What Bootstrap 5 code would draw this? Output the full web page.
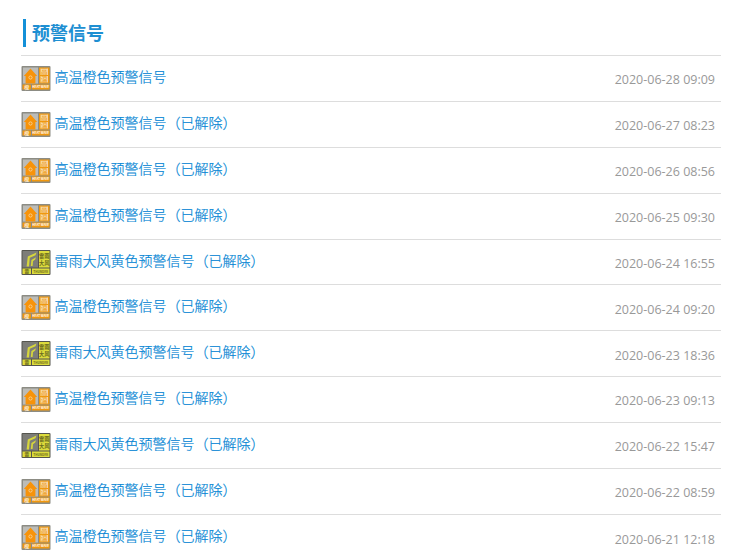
<!DOCTYPE html>
<html lang="zh-CN">
<head>
<meta charset="utf-8">
<title>预警信号</title>
<link rel="stylesheet" href="https://cdn.jsdelivr.net/npm/bootstrap@5.3.0/dist/css/bootstrap.min.css">
<style>
body { background: #fff; font-family: "Open Sans", "Noto Sans CJK SC", sans-serif; overflow: hidden; height: 557px; }
.alert-page { padding: 0 26px 0 21px; }
.alert-head { height: 56px; padding: 19px 0 0 2px; border-bottom: 1px solid #ddd; }
.alert-title { border-left: 3px solid #1490d8; height: 28px; padding-left: 6px; margin: 0; font-size: 18px; line-height: 28px; font-weight: 700; color: #1e8fd2; }
.alert-row { height: 45.9px; border-bottom: 1px solid #ddd; }
.alert-row:last-child { border-bottom: 0; }
.alert-link { color: #0586d4; font-family: "Noto Sans CJK SC", sans-serif; font-weight: 300; -webkit-text-stroke: .2px #0586d4; font-size: 14px; line-height: 20px; text-decoration: none; margin-top: -5px; margin-left: -.5px; }
.alert-time { color: #999; font-size: 12.5px; line-height: 18px; margin-top: 3.6px; margin-right: 6px; }
.alert-ico { width: 30px; height: 25px; margin-right: 4px; flex: none; }
.ico-txt { font-family: "Noto Sans CJK SC", sans-serif; font-weight: 700; text-anchor: middle; }
</style>
</head>
<body>
<svg width="0" height="0" class="d-block" aria-hidden="true">
  <defs>
    <symbol id="ico-heat" viewBox="0 0 30 25">
      <rect x=".5" width="29" height="25" rx="1" fill="#8c8c84"/>
      <rect x="2" y="1.5" width="15" height="16" fill="#bcbcb8"/>
      <rect x="18" y="1.5" width="10.5" height="16" fill="#f0980f"/>
      <rect x="1.5" y="18.5" width="8.5" height="5" fill="#f0980f"/>
      <rect x="11" y="18.5" width="17.5" height="5" fill="#f0980f"/>
      <path d="M9.5 2.5 L16.2 10 H14.4 V17.5 H4.6 V10 H2.8 Z" fill="#f7930a"/>
      <circle cx="9.5" cy="11.5" r="1.6" fill="none" stroke="#f8dfb6" stroke-width=".7"/>
      <rect x="19.5" y="2.5" width="7.5" height="6.5" fill="#f6d9a8"/>
      <rect x="19.5" y="10" width="7.5" height="6.5" fill="#f6d9a8"/>
      <text class="ico-txt" x="23.2" y="8.4" font-size="6.5" fill="#f0a83a">高</text>
      <text class="ico-txt" x="23.2" y="15.9" font-size="6.5" fill="#f0a83a">温</text>
      <text class="ico-txt" x="5.8" y="22.8" font-size="5" fill="#f9e8d0">橙</text>
      <text class="ico-txt" x="19.7" y="22.4" font-size="3" fill="#fff">HEAT WAVE</text>
    </symbol>
    <symbol id="ico-storm" viewBox="0 0 30 25">
      <rect x=".5" width="29" height="25" rx="1" fill="#55554e"/>
      <rect x="1.5" y="1" width="15.5" height="16.5" fill="#7d7d78"/>
      <rect x="18" y="1" width="10.5" height="16.5" fill="#dcdc3c"/>
      <rect x="1.5" y="18.5" width="8.5" height="5.5" fill="#dcdc3c"/>
      <rect x="11" y="18.5" width="17.5" height="5.5" fill="#dcdc3c"/>
      <path d="M5.6 16.5 L6.8 6.5 L15.5 2.5 L14.5 5.2 L8.8 7.8 L8 16.5 Z" fill="#d6d63c"/>
      <path d="M9.8 16 L10.4 10 L15 7.2 L14.2 9.6 L12 11.2 L11.6 16 Z" fill="#d6d63c"/>
      <text class="ico-txt" x="23.2" y="8" font-size="5.2" fill="#6b6b20">雷雨</text>
      <text class="ico-txt" x="23.2" y="15" font-size="5.2" fill="#6b6b20">大风</text>
      <text class="ico-txt" x="5.8" y="23.2" font-size="5" fill="#6b6b20">黄</text>
      <text class="ico-txt" x="19.7" y="22.8" font-size="3" fill="#6b6b20">THUNDER</text>
    </symbol>
  </defs>
</svg>
<main class="alert-page">
  <header class="alert-head"><h1 class="alert-title">预警信号</h1></header>
  <div>
    <div class="alert-row d-flex align-items-center"><svg class="alert-ico"><use href="#ico-heat"/></svg><a class="alert-link" href="#">高温橙色预警信号</a><span class="alert-time ms-auto">2020-06-28 09:09</span></div>
    <div class="alert-row d-flex align-items-center"><svg class="alert-ico"><use href="#ico-heat"/></svg><a class="alert-link" href="#">高温橙色预警信号（已解除）</a><span class="alert-time ms-auto">2020-06-27 08:23</span></div>
    <div class="alert-row d-flex align-items-center"><svg class="alert-ico"><use href="#ico-heat"/></svg><a class="alert-link" href="#">高温橙色预警信号（已解除）</a><span class="alert-time ms-auto">2020-06-26 08:56</span></div>
    <div class="alert-row d-flex align-items-center"><svg class="alert-ico"><use href="#ico-heat"/></svg><a class="alert-link" href="#">高温橙色预警信号（已解除）</a><span class="alert-time ms-auto">2020-06-25 09:30</span></div>
    <div class="alert-row d-flex align-items-center"><svg class="alert-ico"><use href="#ico-storm"/></svg><a class="alert-link" href="#">雷雨大风黄色预警信号（已解除）</a><span class="alert-time ms-auto">2020-06-24 16:55</span></div>
    <div class="alert-row d-flex align-items-center"><svg class="alert-ico"><use href="#ico-heat"/></svg><a class="alert-link" href="#">高温橙色预警信号（已解除）</a><span class="alert-time ms-auto">2020-06-24 09:20</span></div>
    <div class="alert-row d-flex align-items-center"><svg class="alert-ico"><use href="#ico-storm"/></svg><a class="alert-link" href="#">雷雨大风黄色预警信号（已解除）</a><span class="alert-time ms-auto">2020-06-23 18:36</span></div>
    <div class="alert-row d-flex align-items-center"><svg class="alert-ico"><use href="#ico-heat"/></svg><a class="alert-link" href="#">高温橙色预警信号（已解除）</a><span class="alert-time ms-auto">2020-06-23 09:13</span></div>
    <div class="alert-row d-flex align-items-center"><svg class="alert-ico"><use href="#ico-storm"/></svg><a class="alert-link" href="#">雷雨大风黄色预警信号（已解除）</a><span class="alert-time ms-auto">2020-06-22 15:47</span></div>
    <div class="alert-row d-flex align-items-center"><svg class="alert-ico"><use href="#ico-heat"/></svg><a class="alert-link" href="#">高温橙色预警信号（已解除）</a><span class="alert-time ms-auto">2020-06-22 08:59</span></div>
    <div class="alert-row d-flex align-items-center"><svg class="alert-ico"><use href="#ico-heat"/></svg><a class="alert-link" href="#">高温橙色预警信号（已解除）</a><span class="alert-time ms-auto">2020-06-21 12:18</span></div>
  </div>
</main>
</body>
</html>
